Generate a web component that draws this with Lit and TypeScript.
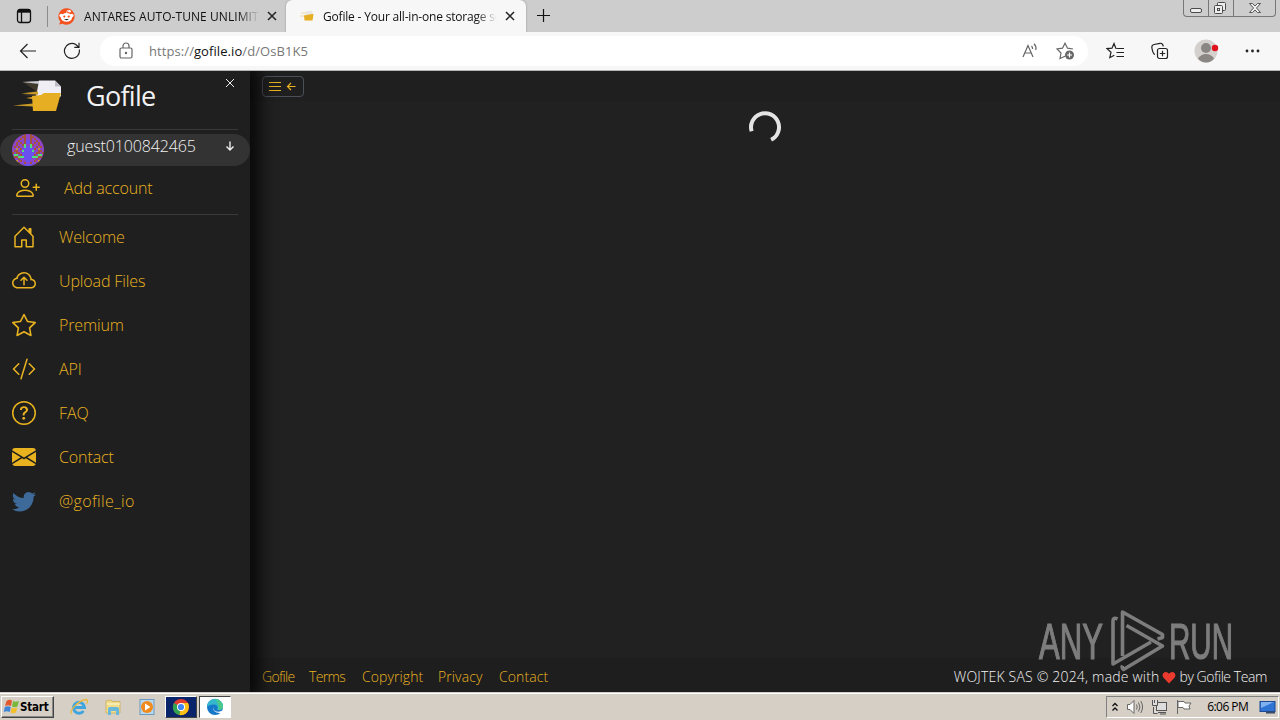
import { LitElement, html, svg, css } from 'lit';
import { customElement } from 'lit/decorators.js';

const NAV = [
  { label: 'Welcome', icon: 'M8.354 1.146a.5.5 0 0 0-.708 0l-6 6A.5.5 0 0 0 1.500 7.500v7a.5.5 0 0 0 .5.5h4.500a.5.5 0 0 0 .5-.5v-4h2v4a.5.5 0 0 0 .5.5H14a.5.5 0 0 0 .5-.5v-7a.5.5 0 0 0-.146-.354L13 5.793V2.500a.5.5 0 0 0-.5-.5h-1a.5.5 0 0 0-.5.5v1.293L8.354 1.146zM2.500 14V7.707l5.500-5.500 5.500 5.500V14H10v-4a.5.5 0 0 0-.5-.5h-3a.5.5 0 0 0-.5.5v4H2.500z' },
  { label: 'Upload Files', icon: 'M7.646 5.146a.5.5 0 0 1 .708 0l2 2a.5.5 0 0 1-.708.708L8.5 6.707V10.5a.5.5 0 0 1-1 0V6.707L6.354 7.854a.5.5 0 1 1-.708-.708l2-2zM4.406 3.342A5.53 5.53 0 0 1 8 2c2.69 0 4.923 2 5.166 4.579C14.758 6.804 16 8.137 16 9.773 16 11.569 14.502 13 12.687 13H3.781C1.708 13 0 11.366 0 9.318c0-1.763 1.266-3.223 2.942-3.593.143-.863.698-1.723 1.464-2.383zm.653.757c-.757.653-1.153 1.44-1.153 2.056v.448l-.445.049C2.064 6.805 1 7.952 1 9.318 1 10.785 2.23 12 3.781 12h8.906C13.98 12 15 10.988 15 9.773c0-1.216-1.02-2.228-2.313-2.228h-.5v-.5C12.188 4.825 10.328 3 8 3a4.53 4.53 0 0 0-2.941 1.1z' },
  { label: 'Premium', icon: 'M2.866 14.85c-.078.444.36.791.746.593l4.39-2.256 4.389 2.256c.386.198.824-.149.746-.592l-.83-4.73 3.522-3.356c.33-.314.16-.888-.282-.95l-4.898-.696L8.465.792a.513.513 0 0 0-.927 0L5.354 5.12l-4.898.696c-.441.062-.612.636-.283.95l3.523 3.356-.83 4.73zm4.905-2.767-3.686 1.894.694-3.957a.565.565 0 0 0-.163-.505L1.71 6.745l4.052-.576a.525.525 0 0 0 .393-.288L8 2.223l1.847 3.658a.525.525 0 0 0 .393.288l4.052.575-2.906 2.77a.565.565 0 0 0-.163.506l.694 3.957-3.686-1.894a.503.503 0 0 0-.461 0z' },
  { label: 'API', icon: 'M10.478 1.647a.5.5 0 1 0-.956-.294l-4 13a.5.5 0 0 0 .956.294l4-13zM4.854 4.146a.5.5 0 0 1 0 .708L1.707 8l3.147 3.146a.5.5 0 0 1-.708.708l-3.5-3.5a.5.5 0 0 1 0-.708l3.5-3.5a.5.5 0 0 1 .708 0zm6.292 0a.5.5 0 0 0 0 .708L14.293 8l-3.147 3.146a.5.5 0 0 0 .708.708l3.5-3.5a.5.5 0 0 0 0-.708l-3.5-3.5a.5.5 0 0 0-.708 0z' },
  { label: 'FAQ', icon: 'M8 15A7 7 0 1 1 8 1a7 7 0 0 1 0 14zm0 1A8 8 0 1 0 8 0a8 8 0 0 0 0 16zM5.255 5.786a.237.237 0 0 0 .241.247h.825c.138 0 .248-.113.266-.25.09-.656.54-1.134 1.342-1.134.686 0 1.314.343 1.314 1.168 0 .635-.374.927-.965 1.371-.673.489-1.206 1.06-1.168 1.987l.003.217a.25.25 0 0 0 .25.246h.811a.25.25 0 0 0 .25-.25v-.105c0-.718.273-.927 1.01-1.486.609-.463 1.244-.977 1.244-2.056 0-1.511-1.276-2.241-2.673-2.241-1.267 0-2.655.59-2.75 2.286zm1.557 5.763c0 .533.425.927 1.01.927.609 0 1.028-.394 1.028-.927 0-.552-.42-.94-1.029-.94-.584 0-1.009.388-1.009.94z' },
  { label: 'Contact', icon: 'M.05 3.555A2 2 0 0 1 2 2h12a2 2 0 0 1 1.95 1.555L8 8.414.05 3.555ZM0 4.697v7.104l5.803-3.558L0 4.697ZM6.761 8.83l-6.57 4.027A2 2 0 0 0 2 14h12a2 2 0 0 0 1.808-1.144l-6.57-4.027L8 9.586l-1.239-.757Zm3.436-.586L16 11.801V4.697l-5.803 3.546Z' },
  { label: '@gofile_io', blue: true, icon: 'M5.026 15c6.038 0 9.341-5.003 9.341-9.334 0-.14 0-.282-.006-.422A6.685 6.685 0 0 0 16 3.542a6.658 6.658 0 0 1-1.889.518 3.301 3.301 0 0 0 1.447-1.817 6.533 6.533 0 0 1-2.087.793A3.286 3.286 0 0 0 7.875 6.03a9.325 9.325 0 0 1-6.767-3.429 3.289 3.289 0 0 0 1.018 4.382A3.323 3.323 0 0 1 .64 6.575v.045a3.288 3.288 0 0 0 2.632 3.218 3.203 3.203 0 0 1-.865.115 3.23 3.23 0 0 1-.614-.057 3.283 3.283 0 0 0 3.067 2.277A6.588 6.588 0 0 1 .78 13.58a6.32 6.32 0 0 1-.78-.045A9.344 9.344 0 0 0 5.026 15z' },
];

const PERSON_PLUS = 'M6 8a3 3 0 1 0 0-6 3 3 0 0 0 0 6zm2-3a2 2 0 1 1-4 0 2 2 0 0 1 4 0zm4 8c0 1-1 1-1 1H1s-1 0-1-1 1-4 6-4 6 3 6 4zm-1-.004c-.001-.246-.154-.986-.832-1.664C9.516 10.68 8.289 10 6 10c-2.29 0-3.516.68-4.168 1.332-.678.678-.83 1.418-.832 1.664h10zM13.5 5a.5.5 0 0 1 .5.5V7h1.5a.5.5 0 0 1 0 1H14v1.5a.5.5 0 0 1-1 0V8h-1.5a.5.5 0 0 1 0-1H13V5.5a.5.5 0 0 1 .5-.5z';

// left half of the identicon, mirrored when drawn
const AVATAR = [
  'pppppprp',
  'ppppprrp',
  'pppprprp',
  'ppprpprb',
  'pprprprb',
  'pprpprgp',
  'prprppgb',
  'ppoprbbb',
  'prrppgbb',
  'rprrpbbb',
  'pggprbbb',
  'prrgggbb',
  'ppprppbb',
  'ppoprppb',
  'ppprpbrp',
  'ppppppbb',
];
const AVATAR_COLORS: Record<string, string> = { p: '#8f45c8', r: '#a3523c', o: '#c68a3a', g: '#4fe27c', b: '#6a50ee' };

@customElement('tab-strip')
class TabStrip extends LitElement {
  static styles = css`
    :host {
      display: flex;
      height: 32px;
      background: #cdcdcd;
      font: 12px "Open Sans", sans-serif;
      color: #111;
    }
    .actions {
      width: 47px;
      padding: 8px 0 0 16px;
      box-sizing: border-box;
    }
    .tab {
      display: flex;
      align-items: center;
      height: 32px;
      box-sizing: border-box;
    }
    .idle {
      width: 239px;
      border-left: 1px solid #8c8c8c;
      border-image: linear-gradient(transparent 20%, #8c8c8c 20%, #8c8c8c 82%, transparent 82%) 1;
      padding-left: 10px;
    }
    .active {
      width: 240px;
      background: #f7f7f7;
      border-radius: 6px 6px 0 0;
      padding-left: 14px;
      box-shadow: 0 0 2px #888;
    }
    .title {
      overflow: hidden;
      white-space: nowrap;
      -webkit-mask-image: linear-gradient(90deg, #000 88%, transparent);
    }
    .idle .title {
      width: 175px;
      margin: 0 8px 0 9px;
      letter-spacing: 0.06px;
    }
    .active .title {
      width: 174px;
      margin: 0 8px;
      letter-spacing: -0.19px;
    }
    .plus {
      padding: 8px 0 0 10px;
    }
    .window {
      display: flex;
      margin-left: auto;
      margin-right: 4px;
      height: 16px;
      border: 1px solid #777;
      border-top: 0;
      border-radius: 0 0 4px 4px;
    }
    svg {
      display: block;
      flex: none;
    }
  `;

  cross() {
    return svg`<path d="M1 1l8 8M9 1l-8 8" stroke="#222" stroke-width="1.5" fill="none"/>`;
  }

  render() {
    return html`
      <div class="actions">
        <svg width="16" height="16" viewBox="0 0 16 16" fill="none" stroke="#111">
          <rect x="1.5" y="1.5" width="13" height="13" rx="2.5" stroke-width="1.3"/>
          <path d="M2 3.2h12" stroke-width="3"/><path d="M5.5 4v10" stroke-width="1.3"/>
        </svg>
      </div>
      <div class="tab idle">
        <svg width="17" height="17" viewBox="0 0 17 17">
          <path d="M8.5 .3a8.2 8.2 0 1 1-4 15.4L1 16.5l1.3-2.8A8.2 8.2 0 0 1 8.5 .3z" fill="#f4511e"/>
          <circle cx="3.2" cy="7.6" r="1.8" fill="#fff"/><circle cx="13.8" cy="7.6" r="1.8" fill="#fff"/>
          <ellipse cx="8.5" cy="9.4" rx="5.6" ry="4.4" fill="#fff"/>
          <circle cx="11.6" cy="3.3" r="1.3" fill="#fff"/><path d="M8.5 5.5l.8-3 2 .5" stroke="#fff" stroke-width=".8" fill="none"/>
          <circle cx="6.3" cy="8.6" r="1.1" fill="#f4511e"/><circle cx="10.7" cy="8.6" r="1.1" fill="#f4511e"/>
          <path d="M6 11q2.500 2.300 5 0z" fill="#222"/>
        </svg>
        <span class="title">ANTARES AUTO-TUNE UNLIMITED</span>
        <svg width="10" height="10">${this.cross()}</svg>
      </div>
      <div class="tab active">
        <svg width="15" height="14" viewBox="0 0 15 14">
          <path d="M6 2h6l1 3v3H5z" fill="#e9e7e4"/><path d="M1 4h5M0 7h5" stroke="#ecd9a0"/>
          <path d="M4 6.500l8-1.500h1.500l-1 6.500h-8z" fill="#e6ae22"/>
        </svg>
        <span class="title">Gofile - Your all-in-one storage solution</span>
        <svg width="10" height="10">${this.cross()}</svg>
      </div>
      <div class="plus">
        <svg width="15" height="15"><path d="M7.500 1v13M1 7.500h13" stroke="#111" stroke-width="1.200"/></svg>
      </div>
      <div class="window">
        <svg width="91" height="16" viewBox="0 0 91 16" fill="#eee" stroke="#4a4a4a">
          <path d="M24.500 0v16M49.500 0v16" stroke="#777"/>
          <rect x="6.500" y="8.500" width="11" height="4" rx="1.500"/>
          <rect x="33.500" y="2.500" width="8" height="8" rx="1"/><rect x="30.500" y="5.500" width="8" height="8" rx="1"/><rect x="33.500" y="8.500" width="2" height="2"/>
          <path d="M65.500 3.500h3l2.500 2.500 2.500-2.500h3l-4 4.500 4 4.500h-3l-2.500-2.500-2.500 2.500h-3l4-4.500z" stroke-width=".9"/>
        </svg>
      </div>
    `;
  }
}

@customElement('address-bar')
class AddressBar extends LitElement {
  static styles = css`
    :host {
      display: flex;
      align-items: center;
      height: 39px;
      box-sizing: border-box;
      background: #f7f7f7;
      border-bottom: 1px solid #b4b8b4;
      font: 13px "Open Sans", sans-serif;
    }
    .nav {
      display: flex;
      gap: 26px;
      width: 100px;
      flex: none;
      box-sizing: border-box;
      padding-left: 19px;
    }
    .url {
      display: flex;
      align-items: center;
      width: 988px;
      flex: none;
      height: 30px;
      box-sizing: border-box;
      padding: 0 12px 0 18px;
      border-radius: 15px;
      background: #fff;
      color: #777;
    }
    .text {
      margin: 0 auto 0 15px;
      letter-spacing: 0.08px;
    }
    b {
      font-weight: 400;
      color: #111;
    }
    .url svg + svg {
      margin-left: 18px;
    }
    .tools {
      display: flex;
      align-items: center;
      flex: none;
      gap: 25px;
      padding-left: 18px;
    }
    svg {
      display: block;
      flex: none;
      fill: none;
      stroke: #222;
      stroke-width: 1.2;
    }
    .url svg {
      stroke: #666;
    }
  `;

  render() {
    return html`
      <div class="nav">
        <svg width="18" height="18"><path d="M17 9H1.500M8.500 2L1.500 9l7 7"/></svg>
        <svg width="18" height="18"><path d="M16.300 7.500A7.500 7.500 0 1 1 12.800 2.500L15.500 5M16 .8V5.300H11.300"/></svg>
      </div>
      <div class="url">
        <svg width="16" height="18"><rect x="2" y="6" width="12" height="10" rx="1.500"/><path d="M5 6V4a3 3 0 0 1 6 0v2"/><circle cx="8" cy="11" r=".6"/></svg>
        <span class="text">https://<b>gofile.io</b>/d/OsB1K5</span>
        <svg width="17" height="18"><path d="M2 15L7 3.500 12 15M3.800 11h6.500M10.500 4q1.300 1.300 1 3M13 1.800q2.600 2.500 1.800 6.200"/></svg>
        <svg width="20" height="18"><path d="M9.500 14l-5.500 2.500 1-5.500L1 7l5.500-.8L9 1.200l2.500 5L17 7"/><circle cx="13.500" cy="13" r="4.500" fill="#666" stroke="none"/><path d="M13.500 10.500v5M11 13h5" stroke="#fff"/></svg>
      </div>
      <div class="tools">
        <svg width="20" height="18"><path d="M13 6.500L9.800 6.300 8 1.500 6 6.200l-5 .4 4 3.600-1.200 5.500 4.500-2.500M10.500 6.500H18M10.500 10.500H18M10.500 14.500H18"/></svg>
        <svg width="18" height="18"><rect x="6.500" y="6.500" width="10" height="10" rx="2"/><path d="M11.500 8.800v5.400M8.800 11.500h5.400M4 12.500C2 12 1.500 9 1 6.500L.8 5C.8 3.500 1.500 2.900 3 2.500L9 1.300c2-.3 3 1 3.300 3"/></svg>
        <svg width="26" height="24">
          <g stroke="none"><circle cx="12" cy="12" r="11.500" fill="#d3d0cd"/><circle cx="12" cy="9" r="5" fill="#8a8683"/><path d="M4 19.500q3-4.500 8-4.500t8 4.500q-3 4-8 4t-8-4z" fill="#8a8683"/><circle cx="21" cy="9" r="3.200" fill="#e1101d"/></g>
        </svg>
        <svg width="16" height="6"><g fill="#222" stroke="none"><circle cx="2" cy="3" r="1.400"/><circle cx="7.500" cy="3" r="1.400"/><circle cx="13" cy="3" r="1.400"/></g></svg>
      </div>
    `;
  }
}

@customElement('side-bar')
class SideBar extends LitElement {
  static styles = css`
    :host {
      display: flex;
      flex-direction: column;
      width: 250px;
      flex: none;
      background: #1f1f1f;
      color: #e9b320;
      font: 300 16px/24px "Open Sans", sans-serif;
      box-shadow: 3px 0 16px 6px #080808;
      clip-path: inset(0 -30px 0 0);
    }
    svg {
      display: block;
      flex: none;
    }
    .brand {
      display: flex;
      height: 58px;
      color: #f2f2f2;
    }
    .logo {
      margin: 8px 0 0 12px;
    }
    .name {
      margin: 8px 0 0 24px;
      width: 140px;
      font-size: 27px;
      font-weight: 400;
      line-height: 34px;
      letter-spacing: -0.7px;
    }
    .close {
      margin: 7px 0 0 -1px;
    }
    .rule {
      height: 1px;
      margin: 0 12px;
      background: #393939;
    }
    .account {
      display: flex;
      align-items: center;
      height: 32px;
      margin-top: 4px;
      padding-left: 12px;
      border-radius: 16px;
      background: #333;
      color: #f2f2f2;
    }
    .account span {
      width: 157px;
      margin: 0 0 9px 23px;
      letter-spacing: -0.12px;
    }
    .account .arrow {
      margin-bottom: 8px;
    }
    .add {
      display: flex;
      align-items: center;
      height: 44px;
      padding-left: 16px;
      gap: 24px;
      margin-bottom: 4px;
      letter-spacing: -0.15px;
    }
    nav {
      display: flex;
      flex-direction: column;
    }
    .item {
      display: flex;
      align-items: center;
      gap: 23px;
      height: 44px;
      padding-left: 12px;
      letter-spacing: -0.12px;
    }
    .item:last-child {
      letter-spacing: 0.35px;
    }
    .blue {
      color: #3d6a98;
    }
  `;

  avatar() {
    const cells = AVATAR.flatMap((row, y) =>
      [...row].flatMap((c, x) => [x, 15 - x].map(px =>
        svg`<rect x=${px} y=${y} width="1" height="1" fill=${AVATAR_COLORS[c]}/>`)));
    return html`
      <svg width="32" height="32" viewBox="0 0 16 16" shape-rendering="crispEdges">
        <clipPath id="round"><circle cx="8" cy="8" r="8"/></clipPath>
        <g clip-path="url(#round)">${cells}</g>
      </svg>`;
  }

  render() {
    return html`
      <div class="brand">
        <svg class="logo" width="50" height="34" viewBox="0 0 50 34">
          <path d="M11 3l16-1-2 12H12l12-2zM10 16l15-3-1 4z" fill="#554b35" opacity=".6"/>
          <path d="M27 1.500h16l6 6v10H24z" fill="#eeeef4"/><path d="M43 1.500v6h6z" fill="#bcbcc6"/>
          <path d="M10 3l17-1v3z" fill="#c9c9d4"/>
          <path d="M9 14.500l17-2v3zM14 19l11-2v4zM1 26.500l20-2v3z" fill="#c99a25"/>
          <path d="M20 17l9-1 3-2h17l-5 18H21z" fill="#e6ae22"/>
        </svg>
        <span class="name">Gofile</span>
        <svg class="close" width="10" height="10"><path d="M1 1l8 8M9 1l-8 8" stroke="#eee"/></svg>
      </div>
      <div class="rule"></div>
      <div class="account">
        ${this.avatar()}
        <span>guest0100842465</span>
        <svg class="arrow" width="12" height="12"><path d="M6 1.500v8.500M2.500 6.500L6 10l3.500-3.500" fill="none" stroke="#eee" stroke-width="1.400"/></svg>
      </div>
      <div class="add">
        <svg width="24" height="24" viewBox="0 0 16 16" fill="currentColor"><path d=${PERSON_PLUS}/></svg>
        <span>Add account</span>
      </div>
      <div class="rule"></div>
      <nav>
        ${NAV.map(item => html`
          <div class="item">
            <svg class=${item.blue ? 'blue' : ''} width="24" height="24" viewBox="0 0 16 16" fill="currentColor"><path d=${item.icon}/></svg>
            <span>${item.label}</span>
          </div>
        `)}
      </nav>
    `;
  }
}

@customElement('main-pane')
class MainPane extends LitElement {
  static styles = css`
    :host {
      display: flex;
      flex-direction: column;
      flex: 1;
      background: #212121;
      font: 300 14px/18px "Open Sans", sans-serif;
    }
    svg {
      display: block;
    }
    .top {
      height: 30px;
      box-sizing: border-box;
      padding: 5px 12px;
      background: #1f1f1f;
    }
    .toggle {
      width: 42px;
      height: 21px;
      box-sizing: border-box;
      border: 1px solid #4b5058;
      border-radius: 4px;
      padding: 4px 5px;
    }
    .body {
      flex: 1;
      padding-top: 9px;
    }
    .spinner {
      margin: 0 auto;
    }
    footer {
      display: flex;
      align-items: center;
      height: 30px;
      padding: 4px 13px 0 12px;
      background: #1e1e1e;
      color: #e9b320;
    }
    .links {
      display: grid;
      grid-template-columns: 47px 53px 76px 61px auto;
      flex: 1;
    }
    .links span {
      letter-spacing: 0.1px;
    }
    .links span:nth-child(-n+2) {
      letter-spacing: -0.65px;
    }
    .credit {
      display: flex;
      align-items: center;
      gap: 3px;
      color: #f2f2f2;
      letter-spacing: 0.19px;
    }
    .credit span:last-child {
      letter-spacing: -0.42px;
    }
  `;

  render() {
    return html`
      <div class="top">
        <div class="toggle">
          <svg width="30" height="12" fill="none" stroke="#e9b320" stroke-width="1.200">
            <path d="M1 1.500h12M1 5.500h12M1 9.500h12M27.500 5.500H20M23 2L19.500 5.500 23 9"/>
          </svg>
        </div>
      </div>
      <div class="body">
        <svg class="spinner" width="34" height="34"><path d="M3.600 21.200A14 14 0 1 1 23.100 29.800" fill="none" stroke="#e4e4e4" stroke-width="4"/></svg>
      </div>
      <footer>
        <div class="links">
          ${['Gofile', 'Terms', 'Copyright', 'Privacy', 'Contact'].map(t => html`<span>${t}</span>`)}
        </div>
        <div class="credit">
          <span>WOJTEK SAS © 2024, made with</span>
          <svg width="14" height="13" viewBox="0 0 14 13"><path d="M7 12.500L1.800 7C-.8 4 1.200 1 3.800 1 5.500 1 6.500 2 7 3c.5-1 1.500-2 3.200-2 2.600 0 4.600 3 2 6z" fill="#ea3b2e"/></svg>
          <span>by Gofile Team</span>
        </div>
      </footer>
    `;
  }
}

@customElement('task-bar')
class TaskBar extends LitElement {
  static styles = css`
    :host {
      display: flex;
      align-items: center;
      height: 28px;
      box-sizing: border-box;
      padding: 1px 1px 1px 1px;
      border-top: 1px solid #d4d0c8;
      background: #d6cfc6;
      box-shadow: inset 0 1px #fff;
      font: 12px "Open Sans", sans-serif;
      color: #000;
    }
    svg {
      display: block;
      flex: none;
    }
    .start {
      display: flex;
      align-items: center;
      width: 53px;
      height: 22px;
      box-sizing: border-box;
      padding-left: 1px;
      border: 1px solid;
      border-color: #fff #444 #444 #fff;
      box-shadow: inset -1px -1px #888;
      font: bold 11.500px "DejaVu Sans Condensed", sans-serif;
      letter-spacing: -0.2px;
    }
    .quick {
      display: flex;
      gap: 14px;
      margin: 0 8px 0 15px;
    }
    .app {
      display: flex;
      align-items: center;
      justify-content: center;
      width: 32px;
      height: 22px;
      box-sizing: border-box;
      margin-right: 2px;
      border: 1px solid;
    }
    .chrome {
      background: #0a246a;
      border-color: #fff #444 #444 #fff;
    }
    .edge {
      background: #fff;
      border-color: #444 #fff #fff #444;
    }
    .tray {
      display: flex;
      align-items: center;
      width: 173px;
      height: 22px;
      box-sizing: border-box;
      margin-left: auto;
      border: 1px solid;
      border-color: #808080 #fff #fff #808080;
      padding: 0 2px 0 4px;
      justify-content: space-between;
    }
    .clock {
      width: 43px;
      margin: 0 2px 0 7px;
      white-space: nowrap;
      letter-spacing: -0.55px;
    }
  `;

  render() {
    return html`
      <div class="start">
        <svg width="17" height="17" viewBox="0 0 17 17">
          <path d="M3.500 3q3-2 5.500-.5L8 8Q5 6.500 2 8z" fill="#e2572b"/><path d="M10 3q2.500 1.500 6 0l-1.500 5.500q-3 1.500-5.500 0z" fill="#7ab83c"/>
          <path d="M1.800 9q3-1.500 6 0l-1 5q-3-1.500-6 0z" fill="#3f86d8"/><path d="M8.800 9.500q2.500 1.500 5.500 0L13 14.500q-3 1.500-5.500 0z" fill="#f3bf2c"/>
        </svg>
        <span>Start</span>
      </div>
      <div class="quick">
        <svg width="20" height="18" viewBox="0 0 20 18" fill="none">
          <path d="M6 9.500h9.500A5.500 5.500 0 1 0 14.500 13" stroke="#3fa5df" stroke-width="3"/>
          <path d="M2.500 16C-.5 14 8 3 17 1.500c2.500 0 1.500 3 .5 4.500" stroke="#e9b93f" stroke-width="1.300"/>
        </svg>
        <svg width="20" height="18" viewBox="0 0 20 18">
          <path d="M3 3l5-1 1 1.500h8V15H3z" fill="#f1dc8a" stroke="#c9a94d" stroke-width=".7"/>
          <path d="M4 6h13" stroke="#fff8d2"/><path d="M5 17V11q0-2 2-2h7q2 0 2 2v6h-3v-4H8v4z" fill="#69b8dc"/>
        </svg>
        <svg width="20" height="18" viewBox="0 0 20 18">
          <rect x="3" y="1.500" width="14" height="15" fill="#b9d8ee" stroke="#6b9ac2"/><circle cx="10" cy="9" r="6" fill="#f08a1c"/><path d="M8 5.500l5.500 3.500L8 12.500z" fill="#fff"/>
        </svg>
      </div>
      <div class="app chrome">
        <svg width="18" height="18" viewBox="0 0 18 18">
          <circle cx="9" cy="9" r="8" fill="#e33b2e"/><path d="M9 9L2 5a8 8 0 0 0 5.500 12z" fill="#31a350"/><path d="M9 9h7.900A8 8 0 0 1 7.500 17z" fill="#fbc116"/><path d="M9 5h7a8 8 0 0 1 .9 4H9z" fill="#fbc116"/>
          <circle cx="9" cy="9" r="4" fill="#fff"/><circle cx="9" cy="9" r="3.100" fill="#4285f4"/>
        </svg>
      </div>
      <div class="app edge">
        <svg width="18" height="18" viewBox="0 0 18 18">
          <circle cx="9" cy="9" r="8" fill="#1577c9"/>
          <path d="M1 9a8 8 0 0 1 16-.5c0 3-3 4.500-6 3 1.500-2 .5-5-3-5S1.500 8 1 9z" fill="#35b8ce"/><path d="M9 1a8 8 0 0 1 8 7.500c0 2.500-2.500 4-5 3.500 2-3 0-7-3-11z" fill="#4bc98a"/>
          <path d="M7.500 8.500c-1 3.500 2 6.500 8 4.500l1.500-1.200L18 15l-4 0C9 15 6 12 7.500 8.500z" fill="#fff"/>
        </svg>
      </div>
      <div class="tray">
        <svg width="8" height="12" fill="none" stroke="#111" stroke-width="1.300"><path d="M1.500 5L4 2.500 6.500 5M1.500 9.500L4 7l2.500 2.500"/></svg>
        <svg width="18" height="16" fill="#fff" stroke="#666"><path d="M1.500 5.500H4l4-4v13l-4-4H1.500z"/><path d="M10.500 5.500q1.500 2.500 0 5M12.500 3.500q3 4.500 0 9M14.800 2q3.500 6 0 12" fill="none"/></svg>
        <svg width="18" height="16" fill="#ddd" stroke="#555"><rect x="5.500" y="3.500" width="10" height="8"/><path d="M7 13.500h8M9 15h6M2.500 8v6.500h4"/><path d="M1.500 1v5.500h5V1M3.500 1v3"/></svg>
        <svg width="18" height="16" fill="#fff" stroke="#666"><path d="M2.500 1v14"/><path d="M3 2.500h6l1 1.500h6l-2 3 1 3H9L8 8.500H3z"/></svg>
        <span class="clock">6:06 PM</span>
        <svg width="17" height="14"><rect x="1" y="1.500" width="15" height="10" fill="#2f73d3" stroke="#1c4a95"/><path d="M2 2h13L2 8z" fill="#7fb1f0"/><path d="M7 12.500h9" stroke="#384a66" stroke-width="2"/></svg>
      </div>
    `;
  }
}

@customElement('app-root')
class AppRoot extends LitElement {
  static styles = css`
    :host {
      display: flex;
      flex-direction: column;
      position: relative;
      width: 1280px;
      height: 720px;
      overflow: hidden;
      background: #212121;
    }
    .page {
      display: flex;
      flex: 1;
      min-height: 0;
    }
    side-bar {
      z-index: 1;
    }
    .watermark {
      position: absolute;
      left: 1036px;
      top: 606px;
      opacity: 0.5;
      font: 50px "Liberation Sans", sans-serif;
    }
  `;

  render() {
    return html`
      <tab-strip></tab-strip>
      <address-bar></address-bar>
      <div class="page">
        <side-bar></side-bar>
        <main-pane></main-pane>
      </div>
      <task-bar></task-bar>
      <svg class="watermark" width="200" height="68" fill="#d8d8d8" stroke="#d8d8d8">
        <text x="3" y="52.500" textLength="64" lengthAdjust="spacingAndGlyphs" stroke-width="1.200">ANY</text>
        <text x="133" y="52.500" textLength="64" lengthAdjust="spacingAndGlyphs" stroke-width="1.200">RUN</text>
        <g fill="none" stroke-width="3.600" stroke-linejoin="round">
          <path d="M86.500 50V6L126.500 28.500v3l-5 1.500"/>
          <path d="M81.500 13q-4.500-2-4.500 2v43L115 36"/>
          <path d="M90.500 19.500L126.500 40 87.500 63.500q-2-1.500-1-4"/>
        </g>
      </svg>
    `;
  }
}
